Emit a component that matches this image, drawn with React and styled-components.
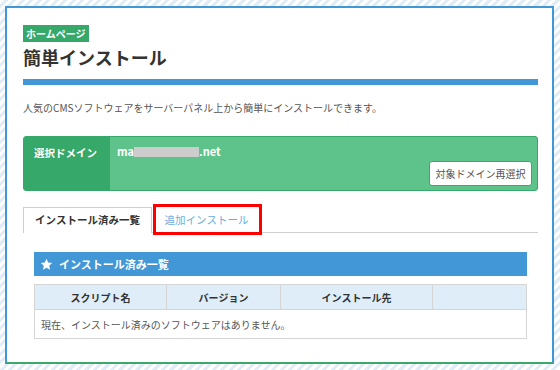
import React from "react";
import styled, { createGlobalStyle } from "styled-components";

const Global = createGlobalStyle`
  html, body {
    margin: 0;
    padding: 0;
  }
  body {
    width: 560px;
    height: 370px;
    overflow: hidden;
    font-family: "Noto Sans CJK JP", "Noto Sans", sans-serif;
    color: #333;
    background: repeating-linear-gradient(
      135deg,
      #ffffff 0,
      #ffffff 3px,
      #e1edf6 3px,
      #e1edf6 6px
    );
  }
`;

const Panel = styled.div`
  box-sizing: border-box;
  width: 549px;
  height: 358px;
  margin: 6px 0 0 5px;
  padding: 17px 14px 0 16px;
  background: #fff;
  border: 2px solid #4297d7;
  border-bottom-color: #3aa96b;
`;

const Badge = styled.div`
  width: fit-content;
  height: 17px;
  line-height: 17px;
  padding: 0 3px;
  background: #35a86a;
  color: #fff;
  font-size: 10px;
  font-weight: 700;
`;

const Title = styled.h1`
  margin: 3px 0 0;
  font-size: 18px;
  line-height: 24px;
  font-weight: 700;
  color: #333;
`;

const TitleBar = styled.div`
  height: 6px;
  margin-top: 10px;
  background: #4297d7;
`;

const Lead = styled.p`
  margin: 15px 0 0;
  font-size: 10px;
  line-height: 16px;
  color: #555;
`;

const DomainBox = styled.div`
  display: flex;
  box-sizing: border-box;
  height: 55px;
  margin-top: 20px;
  border: 1px solid #35a86a;
  border-radius: 3px;
  overflow: hidden;
  background: #5ec38a;
`;

const DomainLabel = styled.div`
  width: 86px;
  padding: 8px 0 0 10px;
  box-sizing: border-box;
  background: #35a86a;
  color: #fff;
  font-size: 10.5px;
  line-height: 16px;
  font-weight: 700;
`;

const DomainBody = styled.div`
  flex: 1;
  display: flex;
  flex-direction: column;
  padding: 6px 5px 4px 7px;
`;

const DomainName = styled.div`
  display: flex;
  align-items: center;
  color: #fff;
  font-size: 11px;
  font-weight: 700;
  line-height: 16px;
`;

const Mask = styled.span`
  display: inline-block;
  width: 65px;
  height: 10px;
  margin-top: 1px;
  background: #cccccc;
`;

const ReselectButton = styled.button`
  align-self: flex-end;
  margin-top: auto;
  width: 103px;
  height: 25px;
  padding: 0;
  background: #fff;
  border: 1px solid #3aa96b;
  border-radius: 3px;
  color: #555;
  font-family: inherit;
  font-size: 10px;
  white-space: nowrap;
`;

const Tabs = styled.div`
  display: flex;
  align-items: flex-end;
  margin-top: 16px;
  border-bottom: 1px solid #cfcfcf;
`;

const Tab = styled.div`
  position: relative;
  box-sizing: border-box;
  width: ${(p) => p.$w}px;
  height: ${(p) => (p.$active ? "26px" : "25px")};
  line-height: 24px;
  border: 1px solid ${(p) => (p.$active ? "#cfcfcf" : "transparent")};
  border-bottom: none;
  margin-bottom: ${(p) => (p.$active ? "-1px" : "0")};
  background: #fff;
  text-align: center;
  white-space: nowrap;
  font-size: 10.5px;
  font-weight: ${(p) => (p.$active ? 700 : 400)};
  color: ${(p) => (p.$active ? "#333" : "#6aaede")};
`;

const Highlight = styled.span`
  position: absolute;
  left: 0;
  right: -2px;
  top: -4px;
  bottom: -3px;
  border: 3px solid #f00;
  pointer-events: none;
`;

const Section = styled.div`
  margin: 19px 11px 0;
`;

const SectionHead = styled.div`
  display: flex;
  align-items: center;
  gap: 6px;
  height: 24px;
  padding-left: 6px;
  background: #4297d7;
  color: #fff;
  font-size: 11px;
  font-weight: 700;
`;

const Table = styled.table`
  width: 100%;
  margin-top: 8px;
  border-collapse: collapse;
  table-layout: fixed;
  font-size: 10px;
`;

const Th = styled.th`
  height: 24px;
  width: ${(p) => (p.$w ? `${p.$w}px` : "auto")};
  padding: 0;
  background: #deedf8;
  border: 1px solid #d5d5d5;
  font-weight: 700;
  color: #333;
`;

const Td = styled.td`
  height: 28px;
  padding: 0 6px;
  border: 1px solid #d5d5d5;
  color: #555;
`;

function Star() {
  return (
    <svg width="13" height="13" viewBox="0 0 24 24">
      <path
        fill="#fff"
        d="M12 1.5l3.1 7 7.4.7-5.6 5 1.7 7.4L12 17.8l-6.6 3.8 1.7-7.4-5.6-5 7.4-.7z"
      />
    </svg>
  );
}

export default function App() {
  return (
    <>
      <Global />
      <Panel>
        <Badge>ホームページ</Badge>
        <Title>簡単インストール</Title>
        <TitleBar />
        <Lead>人気のCMSソフトウェアをサーバーパネル上から簡単にインストールできます。</Lead>

        <DomainBox>
          <DomainLabel>選択ドメイン</DomainLabel>
          <DomainBody>
            <DomainName>
              ma<Mask />.net
            </DomainName>
            <ReselectButton>対象ドメイン再選択</ReselectButton>
          </DomainBody>
        </DomainBox>

        <Tabs>
          <Tab $active $w={129}>インストール済み一覧</Tab>
          <Tab $w={109}>
            追加インストール
            <Highlight />
          </Tab>
        </Tabs>

        <Section>
          <SectionHead>
            <Star />
            インストール済み一覧
          </SectionHead>
          <Table>
            <thead>
              <tr>
                <Th $w={131}>スクリプト名</Th>
                <Th $w={113}>バージョン</Th>
                <Th $w={151}>インストール先</Th>
                <Th />
              </tr>
            </thead>
            <tbody>
              <tr>
                <Td colSpan={4}>現在、インストール済みのソフトウェアはありません。</Td>
              </tr>
            </tbody>
          </Table>
        </Section>
      </Panel>
    </>
  );
}
